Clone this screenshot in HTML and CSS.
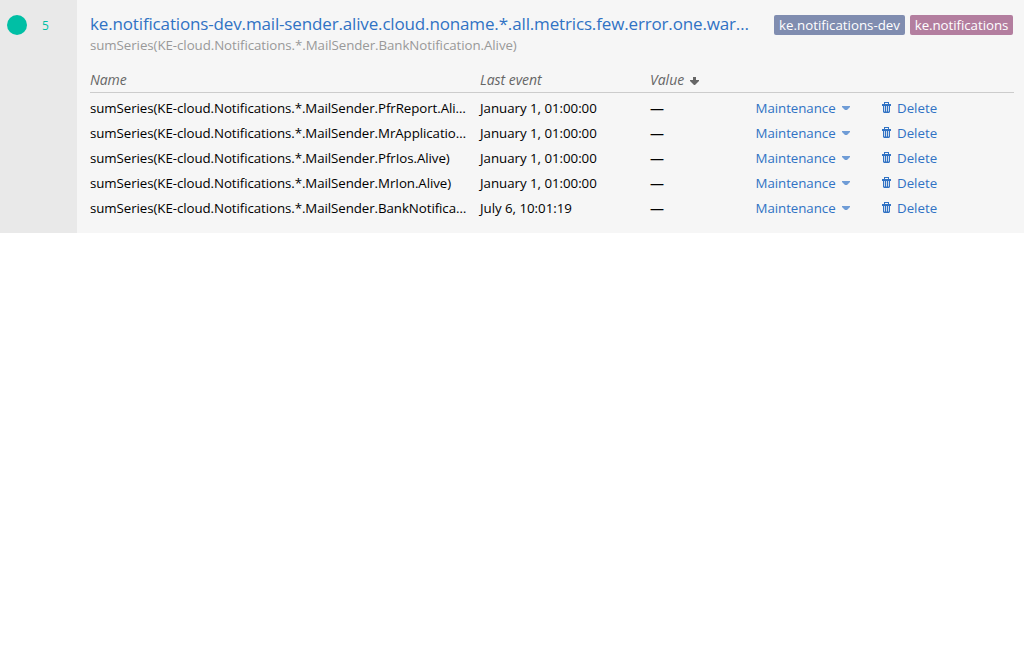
FILE: index.html
```html
<!DOCTYPE html>
<html lang="en">
<head>
<meta charset="utf-8">
<title>Triggers</title>
<link rel="stylesheet" href="styles.css">
</head>
<body>
<svg class="defs" aria-hidden="true">
  <symbol id="trash" viewBox="0 0 9 11"><path fill-rule="evenodd" d="M2 0h5v2h2v2H8v6l-1 1H2l-1-1V4H0V2h2zM3 1v1h3V1zM2.200 4v5.500h.8V4zM4.100 4v5.500h.8V4zM6 4v5.500h.8V4z"/></symbol>
  <symbol id="caret" viewBox="0 0 8 4"><path d="M0 0h8v1L5 4H3L0 1z"/></symbol>
</svg>
<article class="trigger">
  <aside class="state"><span class="dot"></span><span class="count">5</span></aside>
  <div class="data">
    <header class="head">
      <div class="names">
        <a class="title">ke.notifications-dev.mail-sender.alive.cloud.noname.*.all.metrics.few.error.one.war…</a>
        <div class="target">sumSeries(KE-cloud.Notifications.*.MailSender.BankNotification.Alive)</div>
      </div>
      <div class="tags"><span class="tag tag-blue">ke.notifications-dev</span><span class="tag tag-pink">ke.notifications</span></div>
    </header>
    <div class="row row-head">
      <span class="name">Name</span>
      <span class="event">Last event</span>
      <span class="value">Value<svg class="arrow" viewBox="0 0 9 8"><path d="M3 0h3v3h3v1L5 8H4L0 4V3h3z"/></svg></span>
    </div>
    <div class="rows">
      <div class="row">
        <span class="name">sumSeries(KE-cloud.Notifications.*.MailSender.PfrReport.Ali…</span>
        <span class="event">January 1, 01:00:00</span>
        <span class="value">—</span>
        <a class="maint">Maintenance<svg class="caret"><use href="#caret"/></svg></a>
        <a class="del"><svg class="trash"><use href="#trash"/></svg>Delete</a>
      </div>
      <div class="row">
        <span class="name">sumSeries(KE-cloud.Notifications.*.MailSender.MrApplicatio…</span>
        <span class="event">January 1, 01:00:00</span>
        <span class="value">—</span>
        <a class="maint">Maintenance<svg class="caret"><use href="#caret"/></svg></a>
        <a class="del"><svg class="trash"><use href="#trash"/></svg>Delete</a>
      </div>
      <div class="row">
        <span class="name">sumSeries(KE-cloud.Notifications.*.MailSender.PfrIos.Alive)</span>
        <span class="event">January 1, 01:00:00</span>
        <span class="value">—</span>
        <a class="maint">Maintenance<svg class="caret"><use href="#caret"/></svg></a>
        <a class="del"><svg class="trash"><use href="#trash"/></svg>Delete</a>
      </div>
      <div class="row">
        <span class="name">sumSeries(KE-cloud.Notifications.*.MailSender.MrIon.Alive)</span>
        <span class="event">January 1, 01:00:00</span>
        <span class="value">—</span>
        <a class="maint">Maintenance<svg class="caret"><use href="#caret"/></svg></a>
        <a class="del"><svg class="trash"><use href="#trash"/></svg>Delete</a>
      </div>
      <div class="row">
        <span class="name">sumSeries(KE-cloud.Notifications.*.MailSender.BankNotifica…</span>
        <span class="event">July 6, 10:01:19</span>
        <span class="value">—</span>
        <a class="maint">Maintenance<svg class="caret"><use href="#caret"/></svg></a>
        <a class="del"><svg class="trash"><use href="#trash"/></svg>Delete</a>
      </div>
    </div>
  </div>
</article>
</body>
</html>
```
FILE: styles.css
```css
* { box-sizing: border-box; }
body { margin: 0; background: #fff; color: #000; font: 13.3px/20px "Open Sans", "Noto Sans", sans-serif; }
.defs { display: none; }
.trigger { display: flex; height: 233px; background: #f6f6f6; }
.state { display: flex; flex: none; width: 77px; padding: 15px 0 0 7px; gap: 15px; background: #e9e9e9; }
.dot { width: 20px; height: 20px; border-radius: 50%; background: #00bfa5; }
.count { color: #00bfa5; font-size: 12px; line-height: 21px; }
.data { flex: 1; min-width: 0; padding: 12px 10px 0 13px; }
.head { display: flex; justify-content: space-between; height: 55px; padding-right: 1px; white-space: nowrap; }
.title { display: block; font-size: 17px; line-height: 24px; letter-spacing: -0.15px; color: #3072c4; }
.target { color: #999; line-height: 18px; letter-spacing: -0.065px; }
.tags { display: flex; gap: 5px; padding-top: 3px; }
.tag { height: 20px; border-radius: 2px; color: #fff; text-align: center; letter-spacing: -0.05px; }
.tag-blue { width: 131px; background: #808db0; letter-spacing: 0; }
.tag-pink { width: 103px; background: #b37e9f; }
.row { display: flex; height: 25px; line-height: 25px; white-space: nowrap; }
.row-head { height: 26px; font-size: 14px; font-style: italic; color: #666; border-bottom: 1px solid #ccc; }
.rows { padding-top: 3px; }
.name { width: 390px; letter-spacing: -0.075px; }
.event { width: 170px; letter-spacing: -0.03px; }
.value { display: flex; align-items: center; width: 105.5px; }
.rows .value { font-size: 14px; }
.maint, .del { display: flex; align-items: center; color: #3072c4; }
.maint { width: 126px; letter-spacing: -0.05px; }
.arrow { width: 9px; height: 8px; margin: 3px 0 0 6px; fill: #666; }
.caret { width: 8px; height: 4px; margin: 0 0 1px 6px; fill: #6f9cd6; }
.trash { width: 9px; height: 11px; margin: 0 6px 2px 0.5px; fill: #3072c4; }
```
